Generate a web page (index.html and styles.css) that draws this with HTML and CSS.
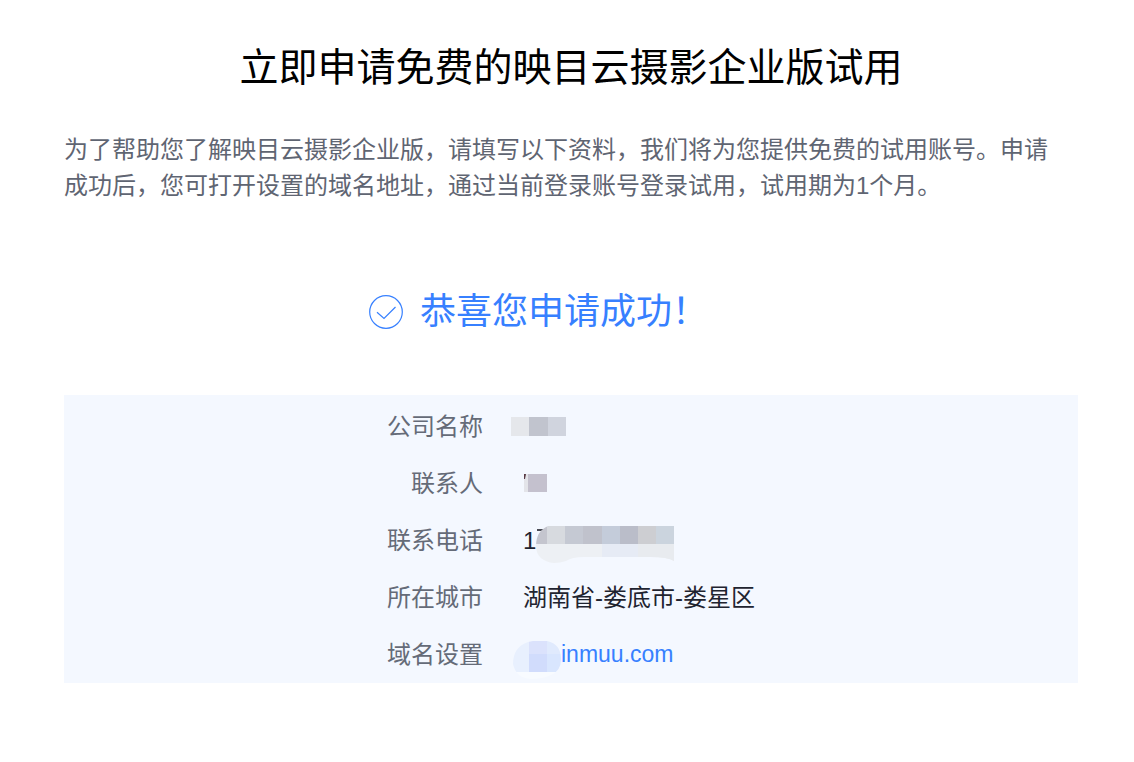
FILE: index.html
```html
<!DOCTYPE html>
<html lang="zh-CN">
<head>
<meta charset="utf-8">
<meta name="viewport" content="width=device-width, initial-scale=1">
<title>映目云摄影企业版试用</title>
<link rel="stylesheet" href="styles.css">
</head>
<body>
<main class="page">
  <h1 class="title">立即申请免费的映目云摄影企业版试用</h1>
  <p class="intro">为了帮助您了解映目云摄影企业版，请填写以下资料，我们将为您提供免费的试用账号。申请成功后，您可打开设置的域名地址，通过当前登录账号登录试用，试用期为1个月。</p>
  <div class="success" role="status">
    <svg class="success-icon" viewBox="0 0 36 36" aria-hidden="true">
      <circle cx="18" cy="18" r="16.3"/>
      <path d="M9 18.2l7 6.3L27.5 13"/>
    </svg>
    <span>恭喜您申请成功！</span>
  </div>
  <dl class="details">
    <dt>公司名称</dt>
    <dd class="wide">
      <svg class="mask" width="55" height="19" viewBox="0 0 55 19" aria-hidden="true">
        <path fill="#e5e7eb" d="M0 0h18v19H0z"/><path fill="#c1c4ce" d="M18 0h19v19H18z"/><path fill="#d0d4de" d="M37 0h18v19H37z"/>
      </svg>
    </dd>
    <dt>联系人</dt>
    <dd>
      <svg class="mask" width="24" height="22" viewBox="0 0 24 22" aria-hidden="true">
        <path fill="#e3e4e9" d="M1 1h4v18H1z"/><path fill="#c4c1ce" d="M5 1h19v18H5z"/><path fill="#583b45" d="M1 1h2l-1 5H1z"/>
      </svg>
    </dd>
    <dt>联系电话</dt>
    <dd>
      <span>1</span>
      <svg class="mask" width="138" height="46" viewBox="0 -8 138 46" aria-hidden="true">
        <defs><clipPath id="phone-shape"><path d="M12 0H138V35Q132 31 114 31H48Q36 31 30 35Q24 37 18 37C7 36 0 30 0 20Q0 5 12 0Z"/></clipPath></defs>
        <path fill="#4a4b55" d="M1 3h8v2H1z"/>
        <g clip-path="url(#phone-shape)">
          <path fill="#edf0f4" d="M0 18h138v20H0z"/><path fill="#e6ebf5" d="M66 18h36v20H66z"/><path fill="#e8ebef" d="M102 18h36v20h-36z"/>
          <path fill="#c4c5ce" d="M0 0h11v18H0z"/><path fill="#d7dadf" d="M11 0h18v18H11z"/><path fill="#c5c9d3" d="M29 0h18v18H29z"/><path fill="#c0c2cc" d="M47 0h19v18H47z"/><path fill="#c4ccda" d="M66 0h18v18H66z"/><path fill="#babdc9" d="M84 0h18v18H84z"/><path fill="#cdced2" d="M102 0h18v18h-18z"/><path fill="#cbd4de" d="M120 0h18v18h-18z"/>
        </g>
      </svg>
    </dd>
    <dt>所在城市</dt>
    <dd>湖南省-娄底市-娄星区</dd>
    <dt>域名设置</dt>
    <dd class="wide">
      <a class="domain" href="#">
        <svg class="mask" width="50" height="48" viewBox="-2 -10 50 48" aria-hidden="true">
          <defs><clipPath id="domain-shape"><path d="M20 0H34Q48 3 48 18Q48 30 38 34Q30 38 18 38Q3 37 0 23Q0 6 15 1Z"/></clipPath></defs>
          <g clip-path="url(#domain-shape)">
            <path fill="#f8fbff" d="M0 31h48v7H0z"/><path fill="#e8f0fe" d="M0 0h16v31H0z"/><path fill="#dbe2fc" d="M16 0h18v13H16z"/><path fill="#d1dcfc" d="M16 13h18v18H16z"/><path fill="#e0eafd" d="M34 0h14v13H34z"/><path fill="#d9e6fe" d="M34 13h14v18H34z"/>
          </g>
        </svg>inmuu.com</a>
    </dd>
  </dl>
</main>
</body>
</html>
```
FILE: styles.css
```css
* {
  box-sizing: border-box;
}

body {
  margin: 0;
  background: #fff;
  color: #1f2430;
  font-family: "Liberation Sans", "Noto Sans CJK SC", sans-serif;
  font-size: 24px;
}

.page {
  padding: 38px 56px 80px 64px;
}

.title {
  margin: 0;
  color: #000;
  font-size: 39px;
  font-weight: 400;
  line-height: 60px;
  text-align: center;
}

.intro {
  margin: 34px 0 0;
  padding-right: 16px;
  color: #5f6572;
  line-height: 36px;
}

.success {
  display: flex;
  align-items: center;
  justify-content: center;
  gap: 16px;
  margin-top: 79px;
  padding-right: 66px;
  color: #3780ff;
  font-size: 36px;
  line-height: 58px;
}

.success-icon {
  width: 36px;
  height: 36px;
  fill: none;
  stroke: #3780ff;
  stroke-width: 1.2;
}

.details {
  display: grid;
  grid-template-columns: 419fr 595fr;
  margin: 54px 0 0;
  padding-top: 3px;
  background: #f4f8ff;
  line-height: 57px;
}

.details dt {
  color: #656b78;
  text-align: right;
}

.details dd {
  display: flex;
  align-items: center;
  margin: 0;
  padding-left: 40px;
}

.details .wide {
  padding-left: 28px;
}

.mask {
  display: block;
  flex: none;
}

.domain {
  display: flex;
  align-items: center;
  color: #3780ff;
  font-size: 23px;
  text-decoration: none;
}
```
